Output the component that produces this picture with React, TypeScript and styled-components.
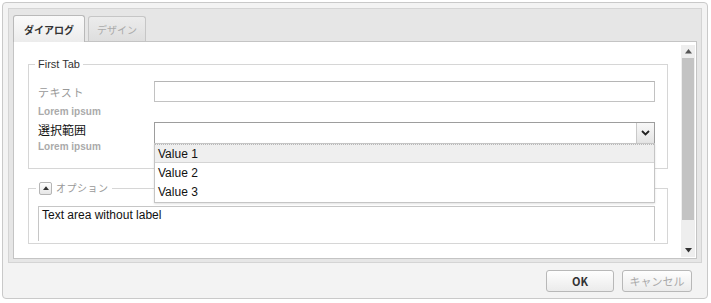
import React from 'react';
import styled, { createGlobalStyle } from 'styled-components';

const GlobalStyle = createGlobalStyle`
  html, body {
    margin: 0;
    padding: 0;
    background: #ffffff;
  }
  body {
    font-family: "Liberation Sans", "Noto Sans CJK JP", sans-serif;
    color: #222;
  }
`;

const JP = `"Noto Sans CJK JP", "Liberation Sans", sans-serif`;

const Window = styled.div`
  margin: 2px 0 0 2px;
  width: 706px;
  height: 297px;
  box-sizing: border-box;
  border: 1px solid #c9c9c9;
  border-radius: 4px;
  background: #f3f3f3;
  padding: 5px 5px 0 5px;
  display: flex;
  flex-direction: column;
`;

const TabPanel = styled.div`
  height: 255px;
  flex-shrink: 0;
  box-sizing: border-box;
  border: 1px solid #d4d4d4;
  background: #e6e6e6;
  padding: 5px 4px 3px 4px;
  display: flex;
  flex-direction: column;
`;

const TabStrip = styled.div`
  display: flex;
  align-items: flex-end;
  gap: 3px;
  height: 27px;
  flex-shrink: 0;
`;

const Tab = styled.div<{ $active?: boolean }>`
  box-sizing: border-box;
  height: ${p => (p.$active ? 27 : 25)}px;
  padding: 0 ${p => (p.$active ? 10 : 8)}px;
  display: flex;
  align-items: center;
  font-family: ${JP};
  font-size: 10px;
  font-weight: ${p => (p.$active ? 700 : 400)};
  color: ${p => (p.$active ? '#333' : '#aaa')};
  border: 1px solid ${p => (p.$active ? '#b9b9b9' : '#c6c6c6')};
  border-bottom: none;
  border-radius: 3px 3px 0 0;
  background: ${p => (p.$active ? 'linear-gradient(#fafafa, #ececec)' : 'linear-gradient(#ececec, #dedede)')};
  margin-bottom: ${p => (p.$active ? -1 : 0)}px;
  position: relative;
  z-index: ${p => (p.$active ? 2 : 1)};
`;

const Body = styled.div`
  flex: 1;
  background: #ffffff;
  border: 1px solid #c4c4c4;
  display: flex;
  min-height: 0;
`;

const Content = styled.div`
  flex: 1;
  padding: 15px 13px 0 14px;
  display: flex;
  flex-direction: column;
  gap: 12px;
`;

const Fieldset = styled.fieldset<{ $pt: number; $pb: number }>`
  margin: 0;
  border: 1px solid #d6d6d6;
  padding: ${p => p.$pt}px 12px ${p => p.$pb}px 9px;
  position: relative;
`;

const Legend = styled.legend`
  font-size: 11px;
  line-height: 14px;
  height: 14px;
  color: #333;
  padding: 0 3px;
  margin-left: -3px;
  display: flex;
  align-items: center;
  gap: 4px;
`;

const OptionLegend = styled(Legend)`
  font-family: ${JP};
  color: #999;
  font-size: 10px;
  letter-spacing: 0.5px;
  margin-left: -2px;
`;

const Toggle = styled.span`
  width: 13px;
  height: 13px;
  box-sizing: border-box;
  border: 1px solid #b5b5b5;
  border-radius: 2px;
  background: linear-gradient(#fefefe, #e6e6e6);
  display: inline-flex;
  align-items: center;
  justify-content: center;
`;

const Row = styled.div<{ $gap?: number }>`
  display: flex;
  align-items: flex-start;
  position: relative;
  margin-top: ${p => p.$gap ?? 0}px;
`;

const LabelCol = styled.div<{ $pt: number }>`
  width: 116px;
  padding-top: ${p => p.$pt}px;
  display: flex;
  flex-direction: column;
`;

const Label = styled.div<{ $dim?: boolean }>`
  font-family: ${JP};
  font-size: ${p => (p.$dim ? 11 : 12)}px;
  color: ${p => (p.$dim ? '#999' : '#111')};
  letter-spacing: ${p => (p.$dim ? 0.6 : 0)}px;
  line-height: ${p => (p.$dim ? 18 : 16)}px;
`;

const Hint = styled.div<{ $mt: number }>`
  margin-top: ${p => p.$mt}px;
  font-size: 10px;
  color: #aaa;
  font-weight: 700;
  line-height: 12px;
`;

const Input = styled.div`
  flex: 1;
  height: 21px;
  box-sizing: border-box;
  border: 1px solid #c2c2c2;
  border-top-color: #b5b5b5;
  background: #fff;
`;

const Select = styled.div`
  flex: 1;
  height: 22px;
  box-sizing: border-box;
  border: 1px solid #9d9d9d;
  background: #fff;
  display: flex;
  justify-content: flex-end;
  position: relative;
`;

const SelectButton = styled.div`
  width: 17px;
  border-left: 1px solid #c9c9c9;
  background: linear-gradient(#f8f8f8, #e4e4e4);
  display: flex;
  align-items: center;
  justify-content: center;
`;

const Menu = styled.div`
  position: absolute;
  left: -1px;
  right: -1px;
  top: 20px;
  background: #fff;
  border: 1px solid #c5c5c5;
  box-shadow: 0 1px 2px rgba(0, 0, 0, 0.12);
  z-index: 5;
  padding-bottom: 1px;
`;

const MenuItem = styled.div<{ $selected?: boolean }>`
  height: 19px;
  box-sizing: border-box;
  padding: 0 3px;
  display: flex;
  align-items: center;
  font-size: 12px;
  color: #111;
  background: ${p => (p.$selected ? '#efefef' : '#fff')};
  border-top: 1px dotted ${p => (p.$selected ? '#b8b8b8' : 'transparent')};
  border-bottom: 1px solid ${p => (p.$selected ? '#d4d4d4' : 'transparent')};
`;

const TextArea = styled.div`
  height: 35px;
  box-sizing: border-box;
  border: 1px solid #c6c6c6;
  border-bottom: none;
  padding: 1px 3px;
  font-size: 12px;
  line-height: 14px;
  color: #111;
`;

const Scrollbar = styled.div`
  width: 14px;
  margin: 3px 1px 1px 0;
  background: #eeeeee;
  display: flex;
  flex-direction: column;
`;

const Arrow = styled.div`
  height: 13px;
  display: flex;
  align-items: center;
  justify-content: center;
`;

const Thumb = styled.div`
  height: 162px;
  margin: 0 1px;
  background: #c3c3c3;
`;

const Track = styled.div`
  flex: 1;
`;

const Footer = styled.div`
  flex: 1;
  display: flex;
  justify-content: flex-end;
  align-items: center;
  gap: 8px;
  padding: 0 10px 0 0;
`;

const Button = styled.div<{ $disabled?: boolean }>`
  width: ${p => (p.$disabled ? 70 : 68)}px;
  height: 22px;
  box-sizing: border-box;
  border: 1px solid #b8b8b8;
  border-radius: 3px;
  background: linear-gradient(#fefefe, #ebebeb);
  display: flex;
  align-items: center;
  justify-content: center;
  font-family: ${JP};
  font-size: 11px;
  font-weight: ${p => (p.$disabled ? 400 : 700)};
  color: ${p => (p.$disabled ? '#aaa' : '#333')};
`;

const Tri = ({ up, size = 7, color = '#333' }: { up?: boolean; size?: number; color?: string }) => (
  <svg width={size} height={size / 2 + 1} viewBox="0 0 8 5">
    <path d={up ? 'M0 5 L4 0 L8 5 Z' : 'M0 0 L8 0 L4 5 Z'} fill={color} />
  </svg>
);

const Chevron = () => (
  <svg width="9" height="6" viewBox="0 0 9 6">
    <path d="M1 1 L4.5 4.5 L8 1" stroke="#222" strokeWidth="1.8" fill="none" />
  </svg>
);

export default function App() {
  const values = ['Value 1', 'Value 2', 'Value 3'];
  return (
    <>
      <GlobalStyle />
      <Window>
        <TabPanel>
          <TabStrip>
            <Tab $active>ダイアログ</Tab>
            <Tab>デザイン</Tab>
          </TabStrip>
          <Body>
            <Content>
              <Fieldset $pt={10} $pb={15}>
                <Legend>First Tab</Legend>
                <Row>
                  <LabelCol $pt={2}>
                    <Label $dim>テキスト</Label>
                    <Hint $mt={5}>Lorem ipsum</Hint>
                  </LabelCol>
                  <Input />
                </Row>
                <Row $gap={4}>
                  <LabelCol $pt={0}>
                    <Label>選択範囲</Label>
                    <Hint $mt={3}>Lorem ipsum</Hint>
                  </LabelCol>
                  <Select>
                    <SelectButton>
                      <Chevron />
                    </SelectButton>
                    <Menu>
                      {values.map((v, i) => (
                        <MenuItem key={v} $selected={i === 0}>
                          {v}
                        </MenuItem>
                      ))}
                    </Menu>
                  </Select>
                </Row>
              </Fieldset>
              <Fieldset $pt={11} $pb={2}>
                <OptionLegend>
                  <Toggle>
                    <Tri up size={6} />
                  </Toggle>
                  オプション
                </OptionLegend>
                <TextArea>Text area without label</TextArea>
              </Fieldset>
            </Content>
            <Scrollbar>
              <Arrow>
                <Tri up size={7} color="#555" />
              </Arrow>
              <Thumb />
              <Track />
              <Arrow>
                <Tri size={7} color="#333" />
              </Arrow>
            </Scrollbar>
          </Body>
        </TabPanel>
        <Footer>
          <Button>OK</Button>
          <Button $disabled>キャンセル</Button>
        </Footer>
      </Window>
    </>
  );
}
